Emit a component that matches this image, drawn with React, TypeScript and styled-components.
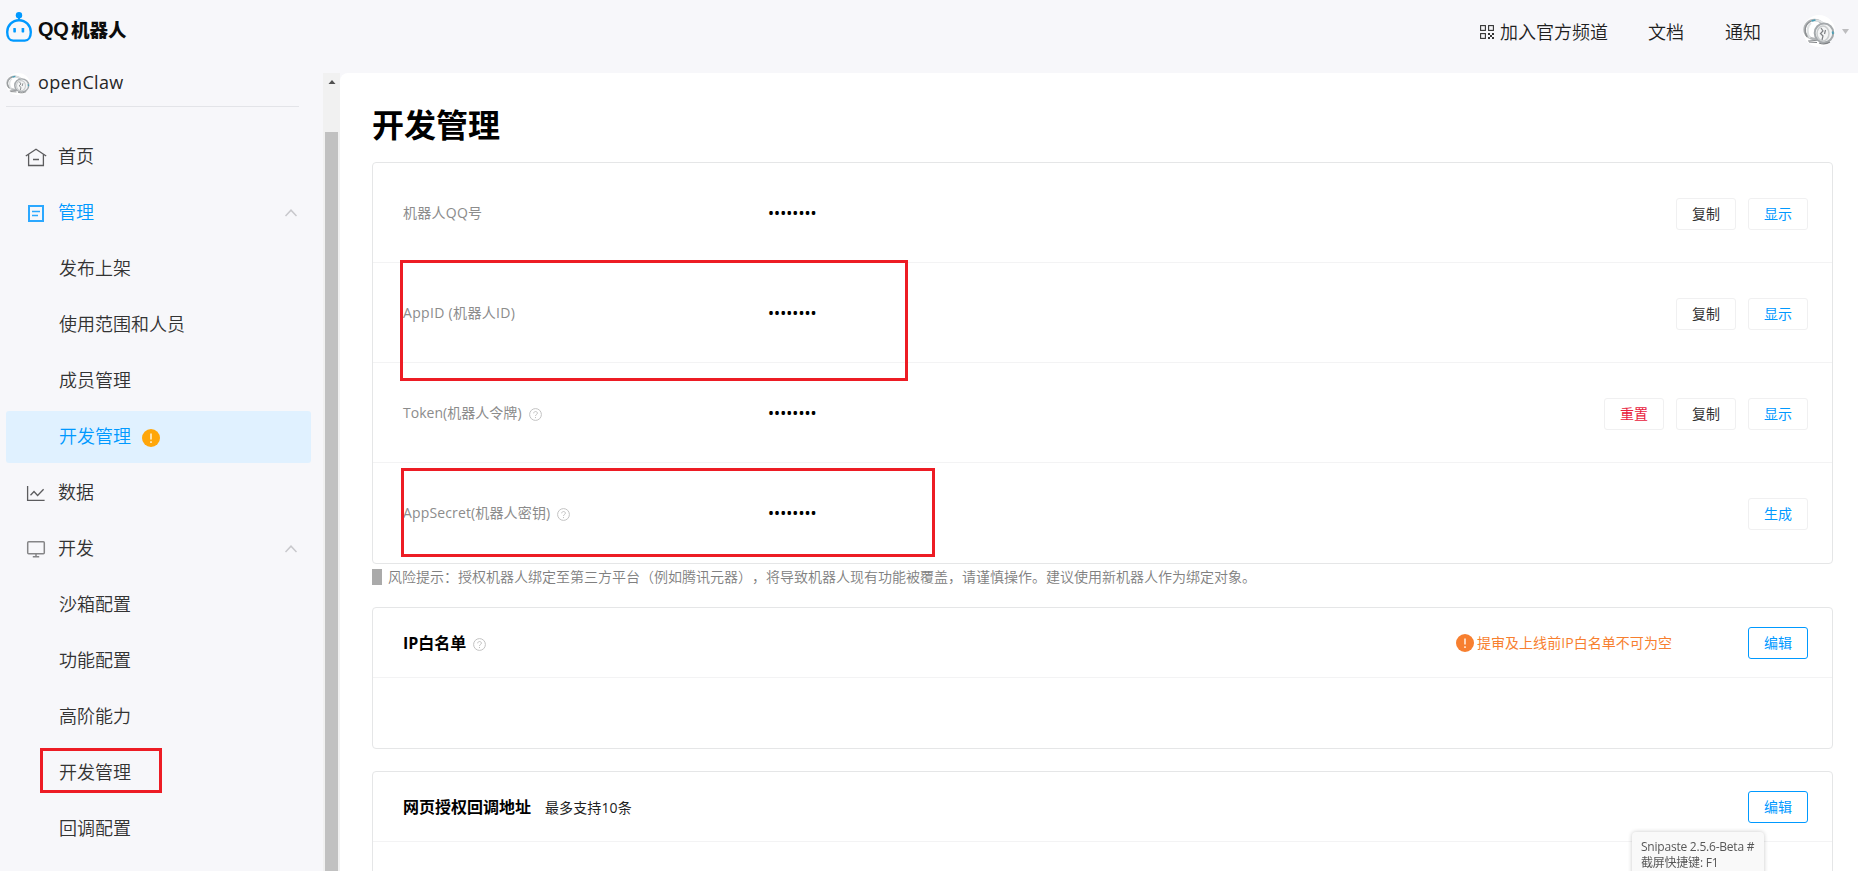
import React from 'react';
import styled, { createGlobalStyle, css } from 'styled-components';

const GlobalStyle = createGlobalStyle`
  * { box-sizing: border-box; }
  body {
    margin: 0;
    overflow: hidden;
    background: #f7f7fa;
    font-family: "Open Sans", "Noto Sans CJK SC", sans-serif;
    font-size: 14px;
    color: #262626;
    text-spacing-trim: space-all;
  }
`;

const Page = styled.div`
  display: flex;
  flex-direction: column;
  width: 100%;
  height: 100vh;
  overflow: hidden;
`;

const Header = styled.header`
  display: flex;
  flex: none;
  justify-content: space-between;
  height: 73px;
  padding: 0 9px 0 6px;
`;

const Logo = styled.div`
  display: flex;
  align-items: flex-start;
  padding-top: 12px;
`;

const LogoText = styled.span`
  display: flex;
  margin: 5px 0 0 6px;
  font-family: "Noto Sans CJK SC", sans-serif;
  font-size: 18.5px;
  font-weight: 900;
  line-height: 24px;
  color: #0c0c0c;
`;

const LogoLatin = styled.span`
  width: 33px;
  font-family: "Liberation Sans", sans-serif;
  font-size: 20px;
  font-weight: 700;
  letter-spacing: -0.4px;
`;

const HeaderNav = styled.nav`
  display: flex;
  align-items: center;
  height: 62px;
  font-size: 18px;
  font-weight: 350;
  color: #1f1f1f;
`;

const NavLink = styled.a<{ $gap: number }>`
  display: flex;
  align-items: center;
  gap: 6px;
  margin-right: ${(p) => p.$gap}px;
  padding-top: 1px;
  line-height: 24px;
`;

const UserMenu = styled.a`
  display: flex;
  align-items: center;
  gap: 7px;
`;

const Body = styled.div`
  display: flex;
  flex: 1;
  min-height: 0;
`;

const Sidebar = styled.aside`
  width: 323px;
  flex: none;
  padding: 0 12px 0 6px;
`;

const BotName = styled.div`
  display: flex;
  align-items: flex-start;
  width: 293px;
  height: 34px;
  gap: 8px;
  border-bottom: 1px solid #e3e4e8;
  font-size: 18px;
  line-height: 18px;
  letter-spacing: 0.35px;
  color: #262626;
`;

const Menu = styled.ul`
  display: flex;
  flex-direction: column;
  gap: 4px;
  margin: 24px 0 0;
  padding: 0;
  list-style: none;
`;

const MenuItem = styled.li<{ $active?: boolean; $blue?: boolean; $sub?: boolean }>`
  position: relative;
  display: flex;
  align-items: center;
  height: 52px;
  padding: 0 14px 0 ${(p) => (p.$sub ? 53 : 18)}px;
  border-radius: 3px;
  font-size: 18px;
  font-weight: 350;
  line-height: 24px;
  color: ${(p) => (p.$active || p.$blue ? '#0099ff' : '#333')};
  background: ${(p) => (p.$active ? '#e0f1ff' : 'transparent')};
`;

const MenuText = styled.span`
  margin-top: -2px;
`;

const MenuIcon = styled.span`
  display: flex;
  width: 34px;
`;

const MenuArrow = styled.svg`
  margin-left: auto;
`;

const WarnSlot = styled.span`
  display: flex;
  margin: 1px 0 0 11px;
`;

const ScrollTrack = styled.div`
  display: flex;
  flex: none;
  flex-direction: column;
  align-items: center;
  width: 17px;
  background: #f1f1f1;
`;

const ScrollArrow = styled.svg`
  flex: none;
  margin: 7px 0 48px;
`;

const ScrollThumb = styled.div`
  width: 13px;
  flex: 1;
  background: #c1c1c1;
`;

const Main = styled.main`
  flex: 1;
  min-width: 0;
  padding: 30px 25px 0 32px;
  overflow: hidden;
  border-top-left-radius: 8px;
  background: #fff;
`;

const Title = styled.h1`
  margin: 0 0 15px;
  font-size: 32px;
  font-weight: 700;
  line-height: 44px;
  color: #000;
`;

const Card = styled.section<{ $tail?: number }>`
  margin-bottom: ${(p) => p.$tail ?? 0}px;
  border: 1px solid #e5e6e7;
  border-radius: 4px;
`;

const Row = styled.div`
  position: relative;
  display: flex;
  align-items: center;
  height: 100px;
  padding: 3px 24px 0 30px;
  & + & { border-top: 1px solid #f3f3f4; }
  &:first-child { height: 99px; }
  &:last-child { height: 101px; padding-bottom: 1px; }
`;

const RowLabel = styled.div`
  display: flex;
  align-items: center;
  gap: 7px;
  width: 365px;
  margin-top: -2px;
  font-size: 14px;
  line-height: 20px;
  color: #8c8c8c;
`;

const LabelText = styled.span<{ $spacing?: number }>`
  letter-spacing: ${(p) => p.$spacing ?? 0}px;
`;

const LabelHelp = styled.span`
  display: flex;
  margin-top: 3px;
`;

const Secret = styled.div`
  margin-top: -2px;
  font-family: "Noto Sans", sans-serif;
  font-size: 16px;
  line-height: 20px;
  letter-spacing: 0.06px;
  color: #000;
`;

const Actions = styled.div`
  display: flex;
  gap: 12px;
  margin-left: auto;
`;

const tones = { dark: '#333', blue: '#0099ff', red: '#e8213d' };

const Button = styled.button<{ $tone: keyof typeof tones; $outlined?: boolean }>`
  width: 60px;
  height: 32px;
  padding: 0 0 1px;
  border: 1px solid #f0f0f1;
  border-radius: 3px;
  background: #fff;
  font-family: inherit;
  font-size: 14px;
  line-height: 20px;
  color: ${(p) => tones[p.$tone]};
  ${(p) => p.$outlined && css`border-color: #0099ff;`}
`;

const RiskNote = styled.p`
  display: flex;
  align-items: center;
  gap: 6px;
  height: 43px;
  margin: 0;
  padding-bottom: 17px;
  font-weight: 350;
  line-height: 20px;
  color: #808080;
  &::before {
    content: "";
    width: 10px;
    height: 16px;
    background: #aaa;
  }
`;

const CardHead = styled.div`
  display: flex;
  align-items: center;
  height: 70px;
  padding: 1px 24px 0 30px;
  border-bottom: 1px solid #f3f3f4;
`;

const CardTitle = styled.h2`
  margin: 0;
  font-size: 16px;
  font-weight: 700;
  line-height: 22px;
  color: #000;
`;

const HelpSlot = styled.span`
  display: flex;
  margin: 2px 0 0 7px;
`;

const CardHint = styled.span`
  margin-left: 14px;
  letter-spacing: 0.1px;
  color: #222;
`;

const Warning = styled.span`
  display: flex;
  align-items: center;
  gap: 3px;
  margin: 0 76px 0 auto;
  line-height: 20px;
  letter-spacing: 0.05px;
  color: #f77f2f;
`;

const HeadButton = styled(Button)<{ $push?: boolean }>`
  margin-left: ${(p) => (p.$push ? 'auto' : '0')};
`;

const CardBody = styled.div`
  height: 70px;
`;

const Mark = styled.div<{ $left: number; $top: number; $w: number; $h: number }>`
  position: absolute;
  z-index: 1;
  left: ${(p) => p.$left}px;
  top: ${(p) => p.$top}px;
  width: ${(p) => p.$w}px;
  height: ${(p) => p.$h}px;
  border: 3px solid #ed1c24;
`;

const Tooltip = styled.div`
  position: fixed;
  left: 1632px;
  top: 832px;
  width: 132px;
  height: 60px;
  padding: 7px 9px;
  border-radius: 4px;
  background: #f9f9f9;
  box-shadow: 0 0 4px rgba(0, 0, 0, 0.22);
  font-size: 12px;
  line-height: 16px;
  letter-spacing: -0.22px;
  white-space: nowrap;
  color: #575757;
`;

const RobotLogo = () => (
  <svg width="26" height="30" viewBox="0 0 26 30" fill="none">
    <circle cx="13" cy="3.2" r="3.2" fill="#0099ff" />
    <path d="M13 4v5" stroke="#0099ff" strokeWidth="2" />
    <path d="M13 8.2C19.6 8.2 24.8 13.5 24.8 20c0 4.900-2.300 8.600-6 8.600H7.200C3.500 28.600 1.200 24.900 1.200 20 1.200 13.500 6.400 8.200 13 8.200z" stroke="#0099ff" strokeWidth="2.400" />
    <rect x="7.300" y="16" width="2.600" height="4.400" rx="0.600" fill="#0099ff" />
    <rect x="15.600" y="16" width="2.600" height="4.400" rx="0.600" fill="#0099ff" />
  </svg>
);

const RingAvatar = ({ width, height }: { width: number; height: number }) => (
  <svg width={width} height={height} viewBox="0 0 32 32" fill="none" preserveAspectRatio="none">
    <circle cx="16" cy="16" r="16" fill="#fff" />
    <ellipse cx="11.500" cy="14.500" rx="10" ry="9.500" stroke="#b3b6b8" strokeWidth="2.400" />
    <path d="M4 22C0.500 16 2 9 8 6.300M5 26l13-1" stroke="#8c8f92" strokeWidth="1.200" />
    <path d="M8 8C4 11 3.500 18 7 23M12 5.500c5-.5 9 2.500 11 6" stroke="#dfe2e3" strokeWidth="2" />
    <ellipse cx="21" cy="18" rx="9.300" ry="9.500" fill="#f4f5f5" stroke="#a5a9ac" strokeWidth="2" />
    <ellipse cx="20" cy="18.500" rx="6" ry="7.400" stroke="#c9cccd" strokeWidth="1.500" />
    <path d="M18 13l2 3-2.500 2.500L20 21l-1 4M22.500 15l-1 4M6 27l8 .5M16 28c4 1.500 8 1 11-1" stroke="#7e8184" strokeWidth="1.200" />
    <path d="M8.500 6l4-1M29.500 16.500l.6 2.500" stroke="#4b9fb5" strokeWidth="1.800" />
  </svg>
);

const QrIcon = () => (
  <svg width="14" height="14" viewBox="0 0 14 14" fill="none" stroke="#333" strokeWidth="1.100">
    <rect x="0.600" y="0.600" width="4.800" height="4.800" />
    <rect x="8.600" y="0.600" width="4.800" height="4.800" />
    <rect x="0.600" y="8.600" width="4.800" height="4.800" />
    <path d="M8 9h2M12 9h2M10 11h2M8 13h2M12 13h2" strokeWidth="2" />
  </svg>
);

const CaretDown = () => (
  <svg width="7" height="5" viewBox="0 0 7 5"><path d="M0 0h7L3.500 5z" fill="#bdbdbf" /></svg>
);

const HomeIcon = () => (
  <svg width="24" height="20" viewBox="0 0 24 20" fill="none" stroke="#5c5c5e" strokeWidth="1.300">
    <path d="M1.800 9L12 2.300 22.200 9M4.600 7.500v11h14.800v-11M9 12.500h6" />
  </svg>
);

const FormIcon = () => (
  <svg width="24" height="20" viewBox="0 0 24 20" fill="none" stroke="#2ba8ff" strokeWidth="2">
    <rect x="5" y="3" width="14" height="15" />
    <path d="M8 8.500h8M8 12.500h6" strokeWidth="1.400" />
  </svg>
);

const ChartIcon = () => (
  <svg width="24" height="20" viewBox="0 0 24 20" fill="none" stroke="#5c5c5e" strokeWidth="1.300">
    <path d="M3.600 3v14.400h17M6.500 12.300l3.500-3.800 3.600 4 6-6.200" />
  </svg>
);

const MonitorIcon = () => (
  <svg width="24" height="20" viewBox="0 0 24 20" fill="none" stroke="#858587" strokeWidth="1.500">
    <rect x="3.700" y="2.800" width="16.600" height="12" rx="1" />
    <path d="M12 15v2.500M8.800 17.700h6.400" />
  </svg>
);

const Chevron = () => (
  <MenuArrow width="12" height="8" viewBox="0 0 12 8" fill="none">
    <path d="M0.500 7L6 1.200 11.500 7" stroke="#c8c8cc" strokeWidth="1.500" />
  </MenuArrow>
);

const Exclaim = ({ color, mark }: { color: string; mark: string }) => (
  <svg width="18" height="18" viewBox="0 0 18 18">
    <circle cx="9" cy="9" r="9" fill={color} />
    <path d="M9 4.500v6" stroke={mark} strokeWidth="1.800" />
    <path d="M9 12.200v1.800" stroke={mark} strokeWidth="1.800" />
  </svg>
);

const HelpIcon = () => (
  <svg width="13" height="13" viewBox="0 0 13 13" fill="none" stroke="#c2c2c2">
    <circle cx="6.500" cy="6.500" r="5.900" />
    <path d="M4.700 5.300c0-2.400 3.700-2.300 3.700-.1C8.400 6.500 6.500 6.500 6.500 8M6.500 9v1.100" />
  </svg>
);

type Item = { text: string; icon?: React.ReactNode; arrow?: boolean; blue?: boolean; active?: boolean; marked?: boolean };

const items: Item[] = [
  { text: '首页', icon: <HomeIcon /> },
  { text: '管理', icon: <FormIcon />, arrow: true, blue: true },
  { text: '发布上架' },
  { text: '使用范围和人员' },
  { text: '成员管理' },
  { text: '开发管理', active: true },
  { text: '数据', icon: <ChartIcon /> },
  { text: '开发', icon: <MonitorIcon />, arrow: true },
  { text: '沙箱配置' },
  { text: '功能配置' },
  { text: '高阶能力' },
  { text: '开发管理', marked: true },
  { text: '回调配置' },
];

export default function App() {
  return (
    <Page>
      <GlobalStyle />
      <Header>
        <Logo>
          <RobotLogo />
          <LogoText><LogoLatin>QQ</LogoLatin>机器人</LogoText>
        </Logo>
        <HeaderNav>
          <NavLink $gap={40}><QrIcon />加入官方频道</NavLink>
          <NavLink $gap={41}>文档</NavLink>
          <NavLink $gap={42}>通知</NavLink>
          <UserMenu><RingAvatar width={32} height={32} /><CaretDown /></UserMenu>
        </HeaderNav>
      </Header>
      <Body>
        <Sidebar>
          <BotName><RingAvatar width={24} height={22} />openClaw</BotName>
          <Menu>
            {items.map((it, i) => (
              <MenuItem key={i} $sub={!it.icon} $active={it.active} $blue={it.blue}>
                {it.icon && <MenuIcon>{it.icon}</MenuIcon>}
                <MenuText>{it.text}</MenuText>
                {it.active && <WarnSlot><Exclaim color="#ffa60a" mark="#ffe9bd" /></WarnSlot>}
                {it.arrow && <Chevron />}
                {it.marked && <Mark $left={34} $top={1} $w={122} $h={45} />}
              </MenuItem>
            ))}
          </Menu>
        </Sidebar>
        <ScrollTrack>
          <ScrollArrow width="8" height="4" viewBox="0 0 8 4"><path d="M0.500 4L4 0l3.500 4z" fill="#505050" /></ScrollArrow>
          <ScrollThumb />
        </ScrollTrack>
        <Main>
          <Title>开发管理</Title>
          <Card>
            <Row>
              <RowLabel><LabelText $spacing={0.25}>机器人QQ号</LabelText></RowLabel>
              <Secret>••••••••</Secret>
              <Actions><Button $tone="dark">复制</Button><Button $tone="blue">显示</Button></Actions>
            </Row>
            <Row>
              <RowLabel><LabelText $spacing={0.32}>AppID (机器人ID)</LabelText></RowLabel>
              <Secret>••••••••</Secret>
              <Actions><Button $tone="dark">复制</Button><Button $tone="blue">显示</Button></Actions>
              <Mark $left={27} $top={-3} $w={508} $h={121} />
            </Row>
            <Row>
              <RowLabel><LabelText $spacing={0.03}>Token(机器人令牌)</LabelText><LabelHelp><HelpIcon /></LabelHelp></RowLabel>
              <Secret>••••••••</Secret>
              <Actions>
                <Button $tone="red">重置</Button>
                <Button $tone="dark">复制</Button>
                <Button $tone="blue">显示</Button>
              </Actions>
            </Row>
            <Row>
              <RowLabel><LabelText $spacing={0.14}>AppSecret(机器人密钥)</LabelText><LabelHelp><HelpIcon /></LabelHelp></RowLabel>
              <Secret>••••••••</Secret>
              <Actions><Button $tone="blue">生成</Button></Actions>
              <Mark $left={28} $top={5} $w={534} $h={89} />
            </Row>
          </Card>
          <RiskNote>风险提示：授权机器人绑定至第三方平台（例如腾讯元器），将导致机器人现有功能被覆盖，请谨慎操作。建议使用新机器人作为绑定对象。</RiskNote>
          <Card $tail={22}>
            <CardHead>
              <CardTitle>IP白名单</CardTitle>
              <HelpSlot><HelpIcon /></HelpSlot>
              <Warning><Exclaim color="#f77f2f" mark="#ffe0c8" />提审及上线前IP白名单不可为空</Warning>
              <HeadButton $tone="blue" $outlined>编辑</HeadButton>
            </CardHead>
            <CardBody />
          </Card>
          <Card>
            <CardHead>
              <CardTitle>网页授权回调地址</CardTitle>
              <CardHint>最多支持10条</CardHint>
              <HeadButton $tone="blue" $outlined $push>编辑</HeadButton>
            </CardHead>
            <CardBody />
          </Card>
        </Main>
      </Body>
      <Tooltip>Snipaste 2.5.6-Beta #<br />截屏快捷键: F1</Tooltip>
    </Page>
  );
}
